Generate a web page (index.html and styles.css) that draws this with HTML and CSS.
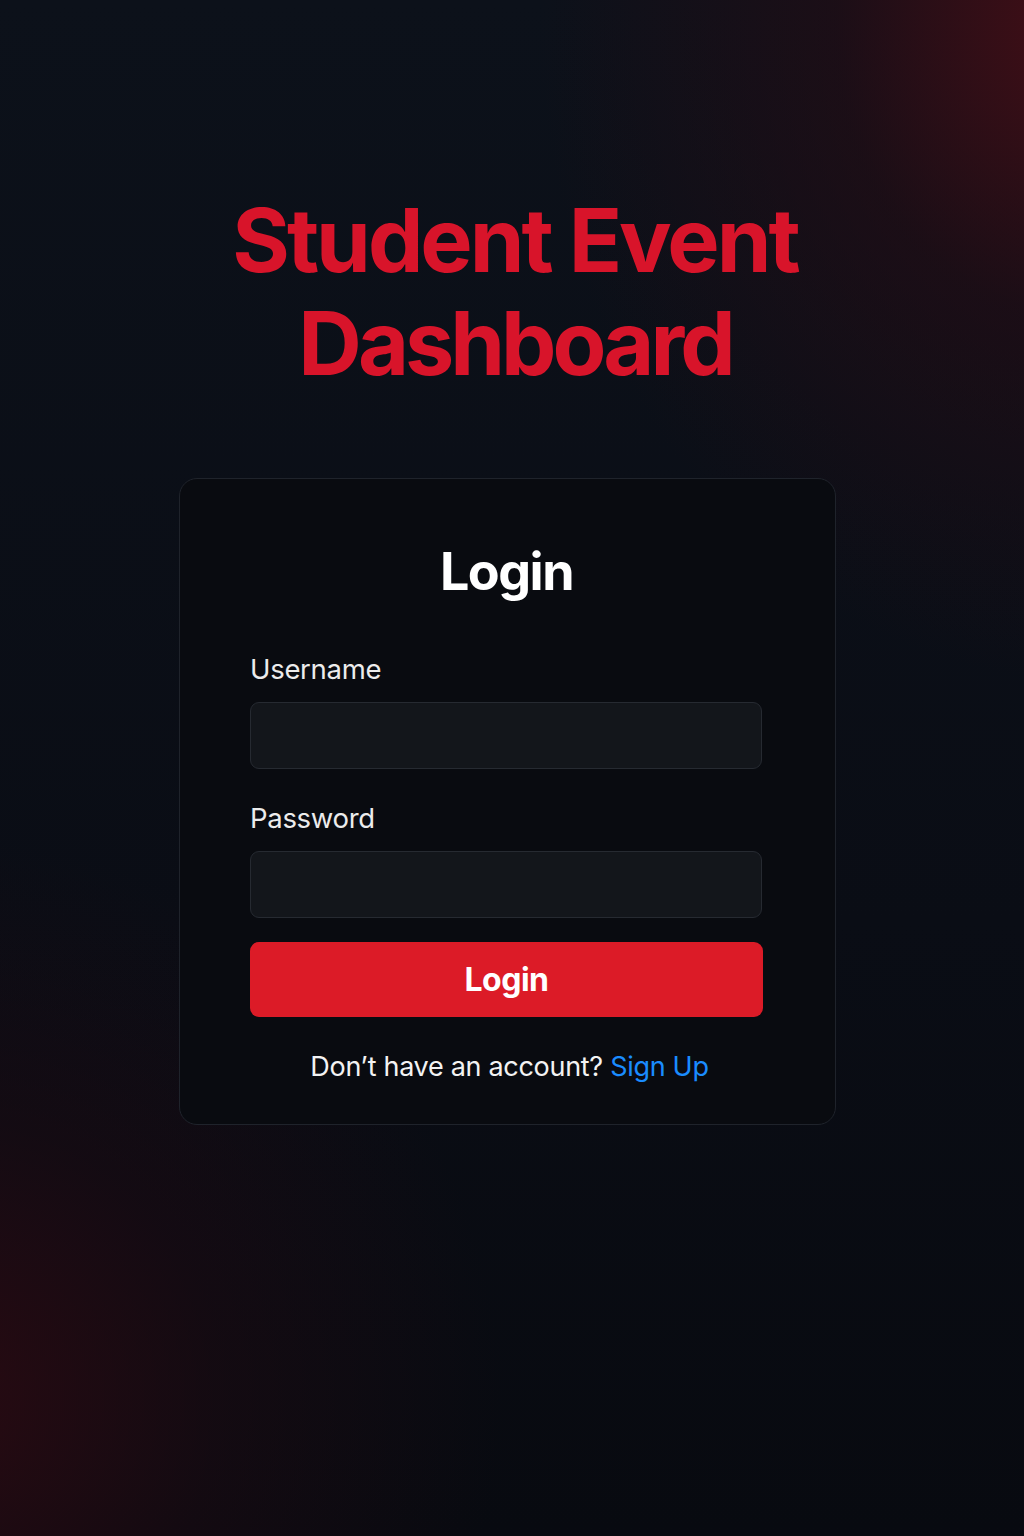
FILE: index.html
```html
<!DOCTYPE html>
<html lang="en">
<head>
<meta charset="utf-8">
<title>Student Event Dashboard</title>
<link rel="stylesheet" href="styles.css">
</head>
<body>
<main class="page">
  <h1 class="title">Student Event<br><span class="title-line2">Dashboard</span></h1>
  <section class="card">
    <h2 class="card-title">Login</h2>
    <form class="form">
      <label class="label" for="username">Username</label>
      <input class="input" id="username" type="text">
      <label class="label label-pass" for="password">Password</label>
      <input class="input" id="password" type="password">
      <button class="btn" type="button">Login</button>
    </form>
    <p class="footer-text">Don’t have an account? <a class="link" href="#">Sign Up</a></p>
  </section>
</main>
</body>
</html>
```

FILE: styles.css
```css
html, body {
  margin: 0;
  padding: 0;
}
body {
  min-height: 1536px;
  font-family: Inter, "Noto Sans", sans-serif;
  color: #f3f3f3;
  background-color: #0b0f17;
  background-image:
    radial-gradient(ellipse 540px 660px at 1080px 20px, rgba(70, 14, 22, 0.95) 0%, rgba(40, 12, 20, 0.55) 45%, rgba(12, 15, 23, 0) 100%),
    radial-gradient(ellipse 560px 560px at -60px 1400px, rgba(42, 10, 18, 0.95) 0%, rgba(30, 10, 18, 0.5) 50%, rgba(10, 12, 18, 0) 100%),
    linear-gradient(180deg, #0c111a 0%, #0a0d15 60%, #080a10 100%);
}
.page {
  display: flex;
  flex-direction: column;
  padding-top: 189px;
}
.title {
  margin: 0;
  text-align: center;
  font-weight: 700;
  font-size: 88px;
  line-height: 103px;
  letter-spacing: -3px;
  color: #d8142a;
  padding-left: 6px;
}
.title-line2 {
  letter-spacing: -4px;
}
.card {
  margin: 83px 0 0 179px;
  width: 657px;
  box-sizing: border-box;
  padding: 62px 72px 40px 70px;
  border: 1px solid #1f232b;
  border-radius: 18px;
  background: #090b10;
  display: flex;
  flex-direction: column;
  align-items: stretch;
}
.card-title {
  margin: 0;
  text-align: center;
  font-size: 52px;
  line-height: 62px;
  font-weight: 700;
  letter-spacing: -1.5px;
  color: #ffffff;
}
.form {
  display: flex;
  flex-direction: column;
  margin-top: 49px;
}
.label {
  font-size: 27.5px;
  line-height: 34px;
  color: #ececec;
  margin-bottom: 16px;
  letter-spacing: -0.3px;
}
.label-pass {
  margin-top: 32px;
}
.input {
  height: 67px;
  box-sizing: border-box;
  margin: 0 1px 0 0;
  border: 1.5px solid #262a31;
  border-radius: 9px;
  background: #13161b;
  outline: none;
}
.btn {
  margin-top: 24px;
  height: 75px;
  border: none;
  border-radius: 9px;
  background: #dc1b27;
  color: #ffffff;
  font-family: Inter, "Noto Sans", sans-serif;
  font-size: 32px;
  font-weight: 700;
  letter-spacing: -0.5px;
}
.footer-text {
  margin: 33px 0 0 6px;
  text-align: center;
  font-size: 27px;
  line-height: 34px;
  color: #f3f3f3;
  letter-spacing: -0.3px;
}
.link {
  color: #1a8cff;
  text-decoration: none;
}
```
